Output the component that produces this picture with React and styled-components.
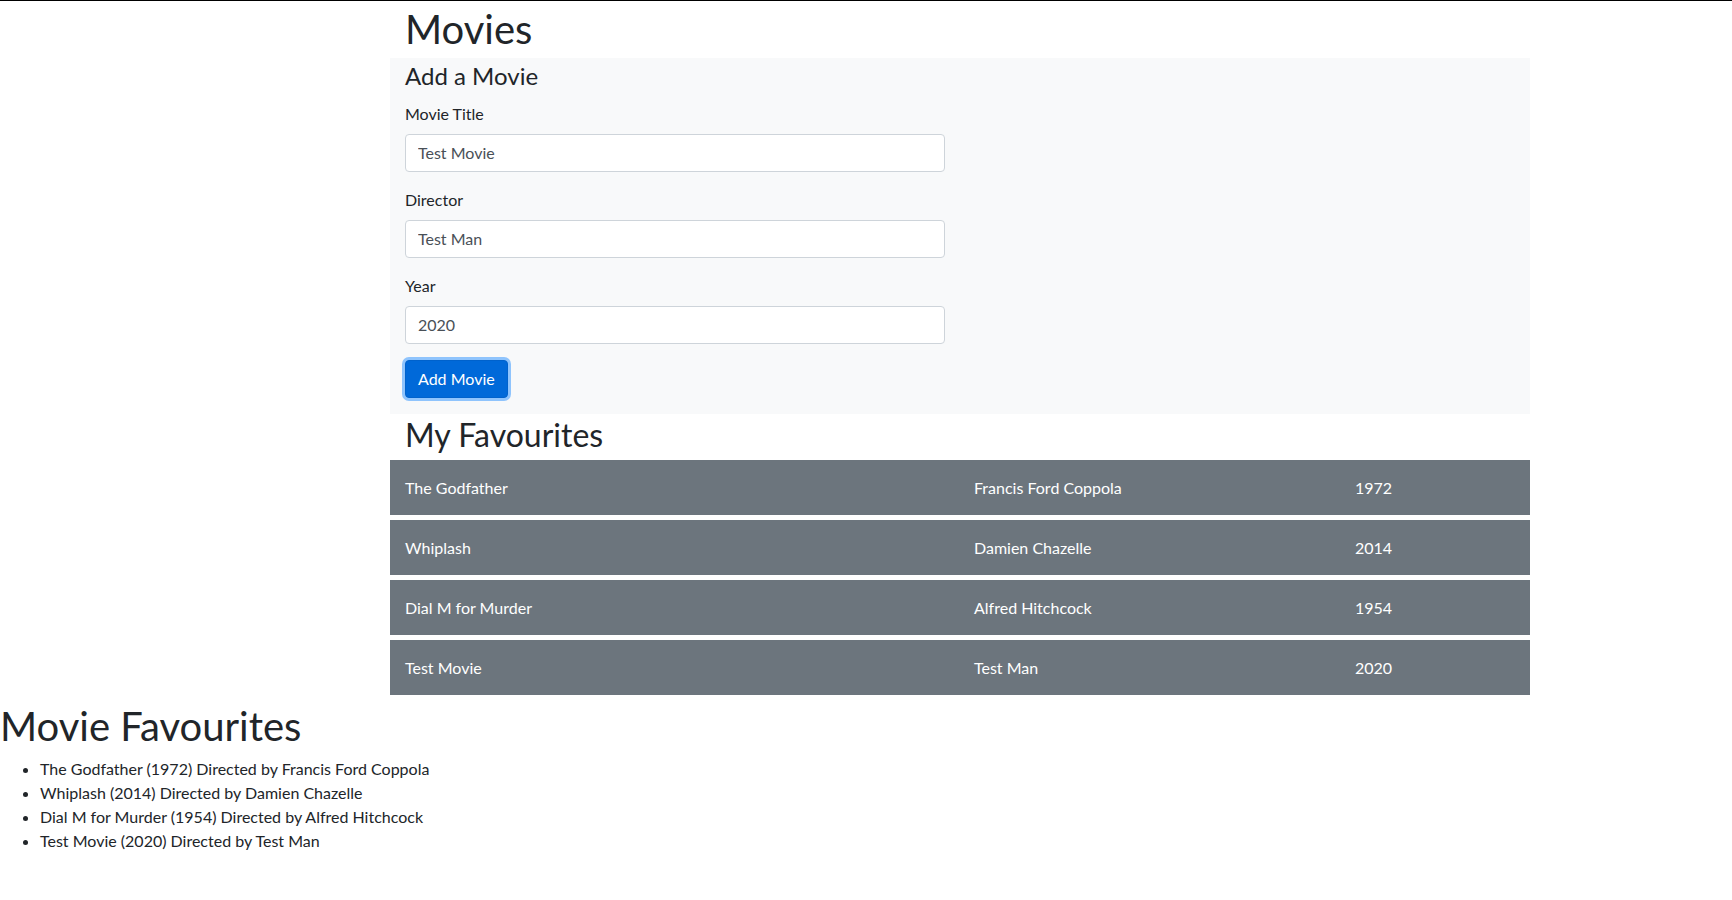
import React from 'react';
import styled, { createGlobalStyle } from 'styled-components';

const GlobalStyle = createGlobalStyle`
  *, *::before, *::after {
    box-sizing: border-box;
  }

  body {
    margin: 0;
    font-family: Lato, 'Liberation Sans', sans-serif;
    font-size: 16px;
    line-height: 1.5;
    color: #212529;
    background: #fff;
  }
`;

const movies = [
  {title: 'The Godfather', director: 'Francis Ford Coppola', year: 1972},
  {title: 'Whiplash', director: 'Damien Chazelle', year: 2014},
  {title: 'Dial M for Murder', director: 'Alfred Hitchcock', year: 1954},
  {title: 'Test Movie', director: 'Test Man', year: 2020},
];

const Page = styled.div`
  border-top: 1px solid #000;
`;

const Container = styled.div`
  width: 1140px;
  margin-left: 390px;
`;

const Title = styled.h1`
  margin: 4px 0 5px;
  padding-left: 15px;
  font-size: 40px;
  font-weight: 400;
  line-height: 1.2;
`;

const Panel = styled.div`
  background: #f8f9fa;
  padding: 4px 15px 16px;
`;

const PanelTitle = styled.h4`
  margin: 0 0 11px;
  font-size: 24px;
  font-weight: 400;
  line-height: 1.2;
`;

const Form = styled.form`
  width: 540px;
`;

const FormGroup = styled.div`
  margin-bottom: 16px;
`;

const Label = styled.label`
  display: block;
  margin-bottom: 8px;
`;

const Input = styled.input`
  display: block;
  width: 100%;
  height: 38px;
  padding: 6px 12px;
  font-family: inherit;
  font-size: 16px;
  line-height: 1.5;
  color: #495057;
  background: #fff;
  border: 1px solid #ced4da;
  border-radius: 4px;
  outline: none;
`;

const Button = styled.button`
  display: inline-block;
  height: 38px;
  padding: 6px 12px;
  font-family: inherit;
  font-size: 16px;
  line-height: 1.5;
  color: #fff;
  background: #0069d9;
  border: 1px solid #0062cc;
  border-radius: 4px;
  box-shadow: 0 0 0 3px rgba(38, 143, 255, 0.5);
  cursor: pointer;
`;

const SectionTitle = styled.h2`
  margin: 0 0 6px;
  padding: 2px 0 0 15px;
  font-size: 32px;
  font-weight: 400;
  line-height: 1.2;
`;

const Table = styled.div`
  display: flex;
  flex-direction: column;
  gap: 5px;
  margin-bottom: 6px;
`;

const Row = styled.div`
  display: grid;
  grid-template-columns: 569px 381px 1fr;
  align-items: center;
  height: 55px;
  background: #6c757d;
  color: #fff;
`;

const Cell = styled.div`
  padding-left: 15px;
`;

const ListTitle = styled.h1`
  margin: 0 0 7px;
  padding-top: 1px;
  font-size: 40px;
  font-weight: 400;
  line-height: 1.2;
`;

const List = styled.ul`
  margin: 0 0 16px;
  padding-left: 40px;
`;

const App = () => {
  return (
    <Page>
      <GlobalStyle />
      <Container>
        <Title>Movies</Title>
        <Panel>
          <PanelTitle>Add a Movie</PanelTitle>
          <Form onSubmit={e => e.preventDefault()}>
            <FormGroup>
              <Label htmlFor="title">Movie Title</Label>
              <Input id="title" defaultValue="Test Movie" />
            </FormGroup>
            <FormGroup>
              <Label htmlFor="director">Director</Label>
              <Input id="director" defaultValue="Test Man" />
            </FormGroup>
            <FormGroup>
              <Label htmlFor="year">Year</Label>
              <Input id="year" defaultValue="2020" />
            </FormGroup>
            <Button type="submit">Add Movie</Button>
          </Form>
        </Panel>
        <SectionTitle>My Favourites</SectionTitle>
        <Table>
          {movies.map(m => (
            <Row key={m.title}>
              <Cell>{m.title}</Cell>
              <Cell>{m.director}</Cell>
              <Cell>{m.year}</Cell>
            </Row>
          ))}
        </Table>
      </Container>
      <ListTitle>Movie Favourites</ListTitle>
      <List>
        {movies.map(m => (
          <li key={m.title}>
            {m.title} ({m.year}) Directed by {m.director}
          </li>
        ))}
      </List>
    </Page>
  );
}

export default App;
